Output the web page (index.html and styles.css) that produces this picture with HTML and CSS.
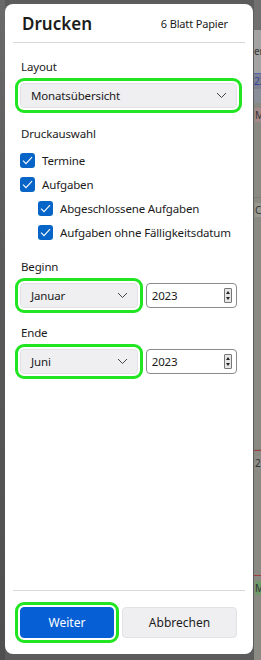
FILE: index.html
```html
<!DOCTYPE html>
<html lang="de">
<head>
    <meta charset="UTF-8">
    <meta name="viewport" content="width=device-width, initial-scale=1.0">
    <title>Drucken</title>
    <link rel="stylesheet" href="styles.css">
</head>
<body>
    <div class="screen">
        <div class="left-edge"></div>

        <div class="dialog">
            <div class="dialog-head">
                <h1>Drucken</h1>
                <span class="sheets">6 Blatt Papier</span>
            </div>
            <div class="rule"></div>

            <div class="dialog-body">
                <div class="field layout">
                    <label class="label">Layout</label>
                    <div class="select wide focus">
                        <span>Monatsübersicht</span>
                        <svg class="chev" width="11" height="7" viewBox="0 0 11 7"><path d="M1 1l4.5 4.5L10 1" fill="none" stroke="#444" stroke-width="1"/></svg>
                    </div>
                </div>

                <div class="field choice">
                    <span class="label">Druckauswahl</span>
                    <div class="checks">
                        <label class="check"><span class="box"><svg width="11" height="9" viewBox="0 0 11 9"><path d="M1 4.6l3 3L10 1.2" fill="none" stroke="#fff" stroke-width="1.1"/></svg></span>Termine</label>
                        <label class="check"><span class="box"><svg width="11" height="9" viewBox="0 0 11 9"><path d="M1 4.6l3 3L10 1.2" fill="none" stroke="#fff" stroke-width="1.1"/></svg></span>Aufgaben</label>
                        <label class="check sub"><span class="box"><svg width="11" height="9" viewBox="0 0 11 9"><path d="M1 4.6l3 3L10 1.2" fill="none" stroke="#fff" stroke-width="1.1"/></svg></span>Abgeschlossene Aufgaben</label>
                        <label class="check sub"><span class="box"><svg width="11" height="9" viewBox="0 0 11 9"><path d="M1 4.6l3 3L10 1.2" fill="none" stroke="#fff" stroke-width="1.1"/></svg></span>Aufgaben ohne Fälligkeitsdatum</label>
                    </div>
                </div>

                <div class="field">
                    <span class="label">Beginn</span>
                    <div class="date-row">
                        <div class="select month focus">
                            <span>Januar</span>
                            <svg class="chev" width="11" height="7" viewBox="0 0 11 7"><path d="M1 1l4.5 4.5L10 1" fill="none" stroke="#444" stroke-width="1"/></svg>
                        </div>
                        <div class="number">
                            <span>2023</span>
                            <span class="spin"><i class="up"></i><i class="down"></i></span>
                        </div>
                    </div>
                </div>

                <div class="field">
                    <span class="label">Ende</span>
                    <div class="date-row">
                        <div class="select month focus">
                            <span>Juni</span>
                            <svg class="chev" width="11" height="7" viewBox="0 0 11 7"><path d="M1 1l4.5 4.5L10 1" fill="none" stroke="#444" stroke-width="1"/></svg>
                        </div>
                        <div class="number">
                            <span>2023</span>
                            <span class="spin"><i class="up"></i><i class="down"></i></span>
                        </div>
                    </div>
                </div>
            </div>

            <div class="rule"></div>
            <div class="dialog-foot">
                <button class="btn primary focus">Weiter</button>
                <button class="btn">Abbrechen</button>
            </div>
        </div>

        <div class="backdrop">
            <div class="bd-top"></div>
            <div class="bd-light"><span>er</span></div>
            <div class="bd-blue"><span>23</span></div>
            <div class="bd-band"></div>
            <div class="bd-cell"><span class="tag pink">M</span></div>
            <div class="bd-cell tall"><span class="tag grey">C</span></div>
            <div class="bd-cell red"><span class="tag grey2">2</span></div>
            <div class="bd-cell red short"><span class="tag green">M</span></div>
        </div>
    </div>
</body>
</html>
```

FILE: styles.css
```css
body {
    margin: 0;
    padding: 0;
    font-family: "Noto Sans", "Segoe UI", sans-serif;
    font-size: 11.5px;
    letter-spacing: -0.15px;
    color: #1b1b1b;
    background: #5c5c5c;
}

.screen {
    display: flex;
    height: 660px;
    overflow: hidden;
}

.left-edge {
    width: 5px;
    flex: none;
    background: linear-gradient(#6a6a6a, #5a5a5a 40%, #4f4f4f);
}

.dialog {
    width: 248px;
    height: 650px;
    margin-top: 4px;
    flex: none;
    background: #fff;
    border-radius: 8px;
    display: flex;
    flex-direction: column;
}

.dialog-head {
    display: flex;
    justify-content: space-between;
    align-items: center;
    height: 38px;
    padding: 0 25px 0 17px;
}

.dialog-head h1 {
    margin: 0;
    font-size: 17px;
    font-weight: 600;
    letter-spacing: 0;
}

.sheets {
    font-size: 11px;
}

.rule {
    height: 1px;
    margin: 0 8px;
    background: #d9d9d9;
}

.dialog-body {
    flex: 1;
    padding: 15px 16px 0 15px;
}

.field {
    margin-bottom: 16px;
}

.field.layout {
    margin-bottom: 17px;
}

.field.choice {
    margin-bottom: 18px;
}

.label {
    display: block;
    padding-left: 1px;
    line-height: 17px;
    margin-bottom: 8px;
}

.focus {
    outline: 3px solid #21e521;
    outline-offset: 2px;
}

.select {
    display: flex;
    justify-content: space-between;
    align-items: center;
    height: 25px;
    box-sizing: border-box;
    padding: 0 9px 0 10px;
    background: #efeff1;
    border: 1px solid #e3e3e6;
    border-radius: 4px;
}

.select.wide {
    width: 217px;
}

.chev {
    flex: none;
}

.checks {
    display: flex;
    flex-direction: column;
    gap: 9px;
    margin-top: 11px;
}

.check {
    display: flex;
    align-items: center;
    gap: 7px;
    height: 15px;
    white-space: nowrap;
}

.check.sub {
    padding-left: 18px;
}

.box {
    width: 15px;
    height: 15px;
    flex: none;
    border-radius: 3px;
    background: #0665c7;
    display: flex;
    align-items: center;
    justify-content: center;
}

.date-row {
    display: flex;
    gap: 8px;
}

.select.month {
    width: 121px;
}

.number {
    width: 94px;
    height: 25px;
    box-sizing: border-box;
    border: 1px solid #8b8b8b;
    border-radius: 4px;
    display: flex;
    justify-content: space-between;
    align-items: center;
    padding: 0 4px 0 5px;
}

.spin {
    width: 6px;
    height: 13px;
    border: 1px solid #777;
    border-radius: 1px;
    background: #e6e6e6;
    display: flex;
    flex-direction: column;
    justify-content: space-around;
    align-items: center;
}

.spin i {
    width: 0;
    height: 0;
    border-left: 2.5px solid transparent;
    border-right: 2.5px solid transparent;
}

.spin .up {
    border-bottom: 3px solid #222;
}

.spin .down {
    border-top: 3px solid #222;
}

.dialog-foot {
    display: flex;
    gap: 8px;
    padding: 16px 16px 16px 15px;
}

.btn {
    height: 31px;
    border-radius: 4px;
    border: 1px solid #e2e2e4;
    background: #efeff1;
    font-family: inherit;
    font-size: 12px;
    color: #1b1b1b;
    width: 115px;
}

.btn.primary {
    width: 94px;
    background: #065fd4;
    border-color: #065fd4;
    color: #fff;
}

.backdrop {
    flex: 1;
    min-width: 0;
    overflow: hidden;
    display: flex;
    flex-direction: column;
    background: #8a8a82;
    margin-left: 1px;
    font-size: 10px;
    white-space: nowrap;
}

.bd-top {
    height: 30px;
    background: #707070;
}

.bd-light {
    height: 44px;
    background: #a3a3a3;
    color: #333;
    display: flex;
    align-items: center;
}

.bd-blue {
    height: 15px;
    background: #7c8090;
    border-top: 1px solid #5566aa;
    color: #334499;
}

.bd-band {
    height: 14px;
    background: #8a8e98;
}

.bd-cell {
    height: 90px;
    border-bottom: 1px solid #7d7d76;
    padding-top: 5px;
    padding-left: 1px;
}

.bd-cell.tall {
    height: 250px;
}

.bd-cell.red {
    border-top: 1px solid #a04040;
    border-bottom: none;
    height: 120px;
}

.bd-cell.short {
    height: 80px;
}

.tag {
    display: inline-block;
    width: 10px;
    height: 14px;
    line-height: 14px;
    color: #333;
}

.tag.pink { background: #a48a88; }
.tag.grey { background: #9a9a90; }
.tag.grey2 { background: #8e8e88; }
.tag.green { background: #6e9a6a; }
```
